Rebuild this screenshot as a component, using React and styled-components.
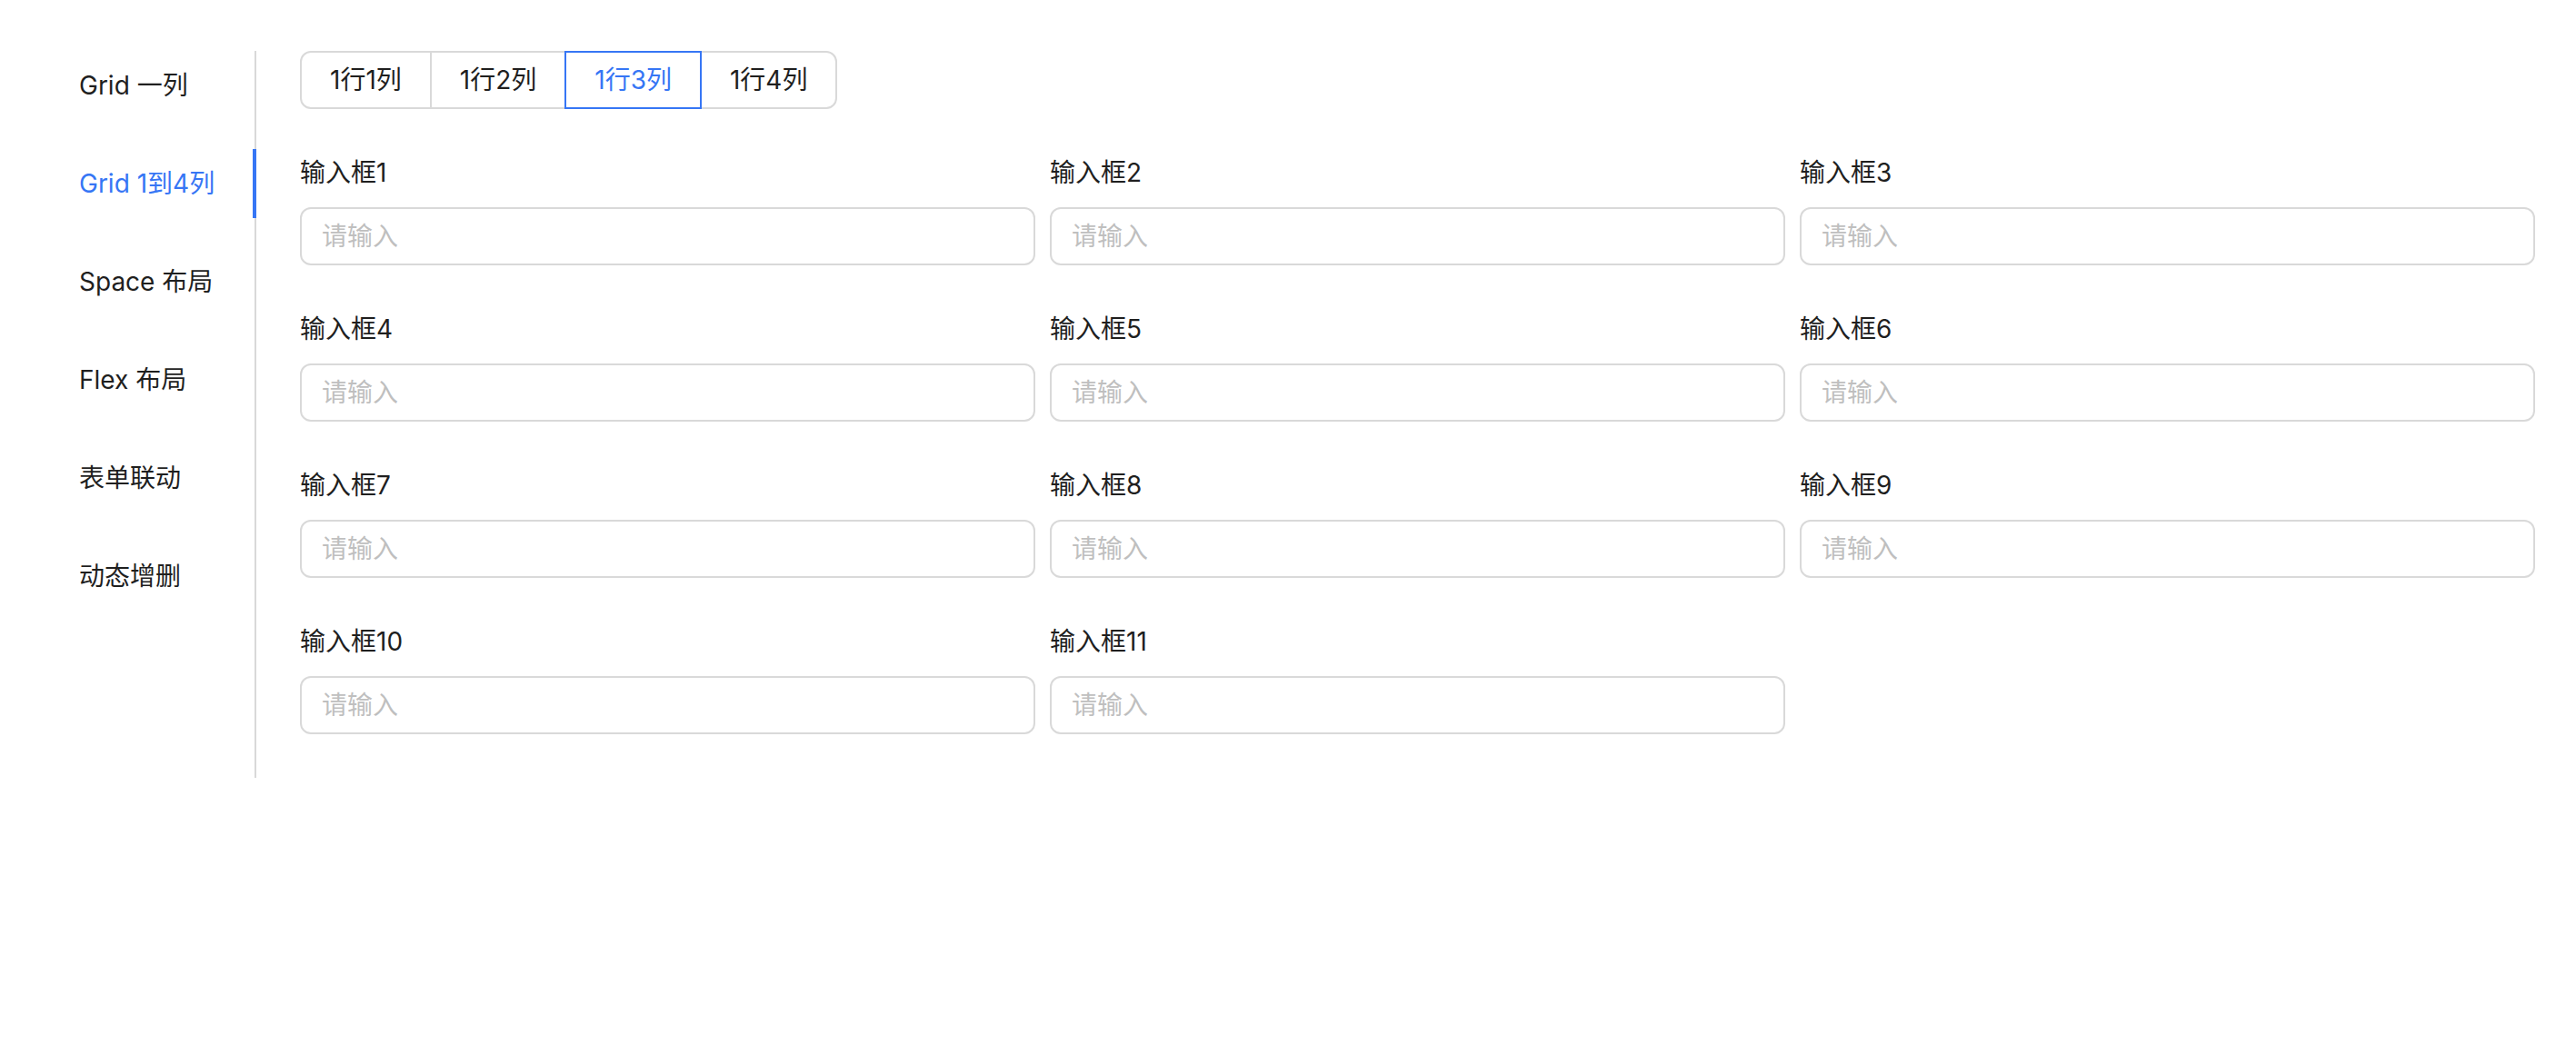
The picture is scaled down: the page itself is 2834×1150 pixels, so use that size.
import React, { useState } from "react";
import styled, { createGlobalStyle } from "styled-components";

const BLUE = "#3676f5";
const TEXT = "#1f1f1f";
const BORDER = "#d9d9d9";

const GlobalStyle = createGlobalStyle`
  html, body {
    margin: 0;
    padding: 0;
    background: #fff;
  }
  body {
    font-family: Inter, "Noto Sans CJK SC", "Noto Sans", sans-serif;
    color: ${TEXT};
  }
`;

const tabs = ["Grid 一列", "Grid 1到4列", "Space 布局", "Flex 布局", "表单联动", "动态增删"];
const layouts = ["1行1列", "1行2列", "1行3列", "1行4列"];
const fields = Array.from({ length: 11 }, (_, i) => `输入框${i + 1}`);

const App = () => {
  const [tab, setTab] = useState(1);
  const [cols, setCols] = useState(3);

  return (
    <Page>
      <GlobalStyle />
      <SideNav>
        {tabs.map((t, i) => (
          <NavItem key={t} $active={i === tab} onClick={() => setTab(i)}>
            {t}
          </NavItem>
        ))}
      </SideNav>
      <Content>
        <Segmented>
          {layouts.map((l, i) => (
            <SegButton key={l} $active={i + 1 === cols} onClick={() => setCols(i + 1)}>
              {l}
            </SegButton>
          ))}
        </Segmented>
        <FormGrid $cols={cols}>
          {fields.map((f) => (
            <FormItem key={f}>
              <Label>{f}</Label>
              <Input placeholder="请输入" />
            </FormItem>
          ))}
        </FormGrid>
      </Content>
    </Page>
  );
};

const Page = styled.div`
  display: flex;
  align-items: stretch;
  padding: 56px 45px 0 39px;
`;

const SideNav = styled.nav`
  flex-shrink: 0;
  width: 243px;
  box-sizing: border-box;
  border-right: 2px solid ${BORDER};
  display: flex;
  flex-direction: column;
  gap: 32px;
`;

const NavItem = styled.div`
  position: relative;
  padding: 16px 0 16px 48px;
  font-size: 28px;
  line-height: 44px;
  white-space: nowrap;
  cursor: pointer;
  color: ${(p) => (p.$active ? BLUE : TEXT)};

  &::after {
    content: "";
    display: ${(p) => (p.$active ? "block" : "none")};
    position: absolute;
    top: 0;
    bottom: 0;
    right: -2px;
    width: 4px;
    background: ${BLUE};
  }
`;

const Content = styled.main`
  flex: 1;
  min-width: 0;
  padding-left: 48px;
`;

const Segmented = styled.div`
  display: inline-flex;
  margin-bottom: 48px;
`;

const SegButton = styled.button`
  position: relative;
  z-index: ${(p) => (p.$active ? 1 : 0)};
  height: 64px;
  box-sizing: border-box;
  padding: 0 31px;
  margin: 0 0 0 -2px;
  border: 2px solid ${(p) => (p.$active ? BLUE : BORDER)};
  background: #fff;
  color: ${(p) => (p.$active ? BLUE : TEXT)};
  font-family: inherit;
  font-size: 28px;
  line-height: 60px;
  cursor: pointer;
  border-radius: 0;

  &:first-child {
    margin-left: 0;
    border-radius: 12px 0 0 12px;
  }
  &:last-child {
    border-radius: 0 12px 12px 0;
  }
`;

const FormGrid = styled.div`
  display: grid;
  grid-template-columns: repeat(${(p) => p.$cols}, minmax(0, 1fr));
  column-gap: 16px;
`;

const FormItem = styled.div`
  margin-bottom: 48px;
`;

const Label = styled.div`
  font-size: 28px;
  line-height: 44px;
  padding-bottom: 16px;
  color: ${TEXT};
`;

const Input = styled.input`
  display: block;
  width: 100%;
  height: 64px;
  box-sizing: border-box;
  border: 2px solid ${BORDER};
  border-radius: 12px;
  padding: 0 22px;
  font-family: inherit;
  font-size: 28px;
  color: ${TEXT};
  outline: none;

  &::placeholder {
    color: #bfbfbf;
  }
`;

export default App;
